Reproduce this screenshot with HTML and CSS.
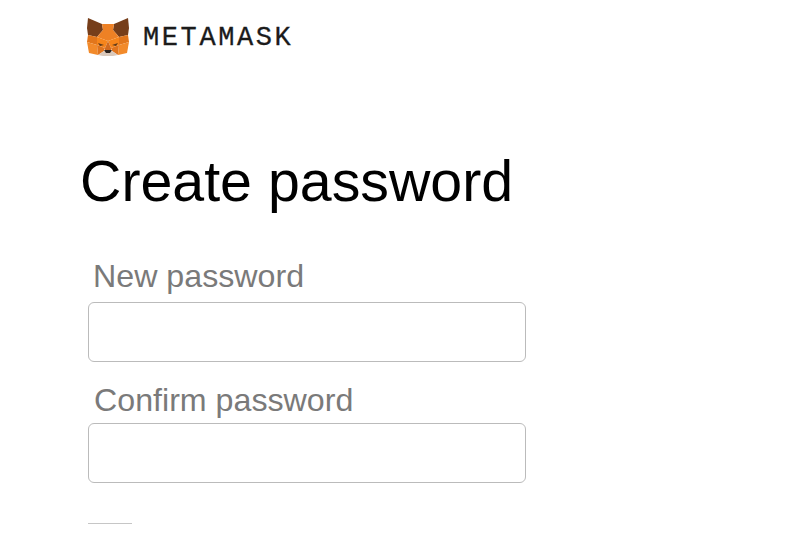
FILE: index.html
```html
<!DOCTYPE html>
<html lang="en">
<head>
<meta charset="utf-8">
<title>MetaMask - Create password</title>
<link rel="stylesheet" href="styles.css">
</head>
<body>
<div class="page">
  <header class="brand">
    <svg class="fox" viewBox="0 0 42 39" width="42" height="39" aria-hidden="true">
      <polygon points="1,1 15,7 16,13 10,20 1,18 0,11" fill="#763e1a"/>
      <polygon points="41,1 27,7 26,13 32,20 41,18 42,11" fill="#763e1a"/>
      <polygon points="15,7 27,7 26,13 32,20 21,24 10,20 16,13" fill="#ee8125"/>
      <polygon points="1,18 10,20 10,28 0,25" fill="#e2761b"/>
      <polygon points="41,18 32,20 32,28 42,25" fill="#e2761b"/>
      <polygon points="10,20 21,24 18,31 10,28" fill="#f6851b"/>
      <polygon points="32,20 21,24 24,31 32,28" fill="#f6851b"/>
      <polygon points="0,25 10,28 11,38 2,36" fill="#f28a2a"/>
      <polygon points="42,25 32,28 31,38 40,36" fill="#f28a2a"/>
      <polygon points="10,28 18,31 17,34 11,38" fill="#e0741d"/>
      <polygon points="32,28 24,31 25,34 31,38" fill="#e0741d"/>
      <polygon points="18,31 21,24 24,31 24,33 18,33" fill="#d26a1e"/>
      <polygon points="11,38 17,34 25,34 31,38 26,39 16,39" fill="#d9c8bb"/>
      <polygon points="17,33 25,33 23,36 19,36" fill="#2b2320"/>
      <polygon points="11,26 17,28 13,29" fill="#5c3a1c"/>
      <polygon points="31,26 25,28 29,29" fill="#5c3a1c"/>
    </svg>
    <span class="wordmark">METAMASK</span>
  </header>
  <h1 class="title">Create password</h1>
  <form class="form">
    <label class="label label-new" for="new-password">New password</label>
    <input class="input" id="new-password" type="password">
    <label class="label label-confirm" for="confirm-password">Confirm password</label>
    <input class="input" id="confirm-password" type="password">
  </form>
  <div class="rule"></div>
</div>
</body>
</html>
```

FILE: styles.css
```css
html, body {
  margin: 0;
  height: 100%;
  overflow: hidden;
  background: #fff;
}

body {
  font-family: "Liberation Sans", Arial, sans-serif;
}

.page {
  display: flex;
  flex-direction: column;
  padding: 17px 0 0 88px;
}

.brand {
  display: flex;
  align-items: center;
  gap: 14px;
  height: 39px;
  margin-left: -1px;
}

.fox {
  display: block;
  flex: none;
}

.wordmark {
  padding-top: 3px;
  font-family: "Liberation Mono", monospace;
  font-size: 27px;
  font-weight: 400;
  letter-spacing: 2.6px;
  color: #1b1b1b;
  line-height: 39px;
  -webkit-text-stroke: 0.3px #1b1b1b;
}

.title {
  margin: 92px 0 0 -8px;
  font-size: 57.3px;
  font-weight: 400;
  line-height: 66px;
  color: #000;
}

.form {
  display: flex;
  flex-direction: column;
  margin-top: 43px;
}

.label {
  font-size: 32.2px;
  line-height: 38px;
  color: #7a7a7a;
}

.label-new {
  margin: 0 0 7px 5px;
}

.label-confirm {
  margin: 19px 0 4px 6px;
}

.input {
  box-sizing: border-box;
  width: 438px;
  height: 60px;
  padding: 0 12px;
  background: #fff;
  border: 1px solid #bbbbbb;
  border-radius: 6px;
  outline: none;
}

.rule {
  width: 44px;
  height: 1px;
  margin-top: 40px;
  background: #c6c6c6;
}
```
